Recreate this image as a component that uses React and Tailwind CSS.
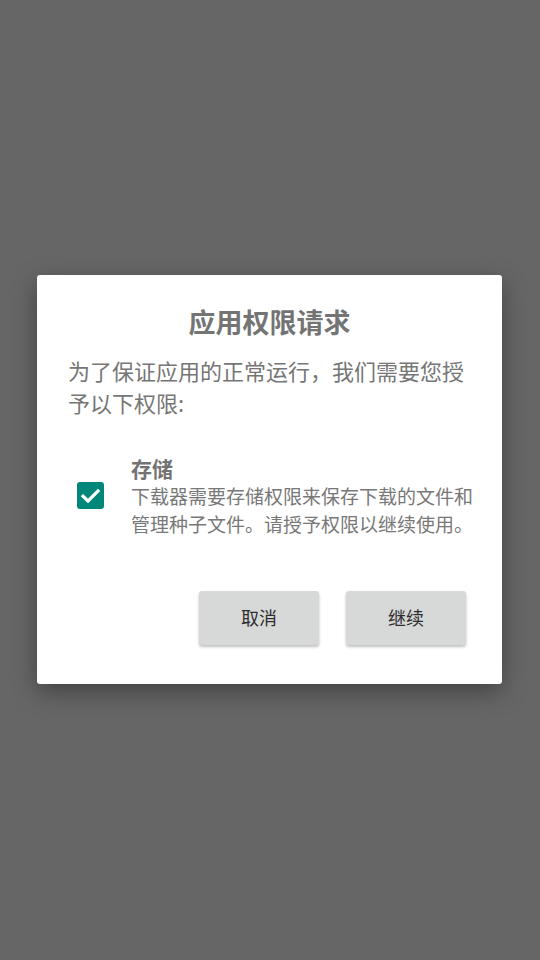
export default function App() {
  return (
    <div
      className="w-full h-screen bg-[#666666] flex items-center justify-center pr-px pb-[2px]"
      style={{ fontFamily: '"Noto Sans CJK SC", "Noto Sans", sans-serif' }}
    >
      <div className="w-[465px] bg-white rounded-[3px] shadow-[0_8px_24px_rgba(0,0,0,0.35)] pt-[29px] pb-[39px]">
        {/* Title */}
        <h1 className="text-center text-[27px] leading-[36px] font-bold text-[#747474]">
          应用权限请求
        </h1>

        {/* Intro */}
        <p className="mt-[14px] px-[31px] text-[22px] leading-[32px] text-[#767676]">
          为了保证应用的正常运行，我们需要您授予以下权限:
        </p>

        {/* Permission row */}
        <div className="mt-[36px] flex items-center pl-[40px]">
          <div className="w-[27px] h-[27px] rounded-[3px] bg-[#00877a] shrink-0">
            <svg width="27" height="27" viewBox="0 0 27 27" fill="none">
              <path
                d="M6 14.2l5 4.8L21 9"
                stroke="white"
                strokeWidth="3.2"
                strokeLinecap="square"
                strokeLinejoin="miter"
              />
            </svg>
          </div>
          <div className="ml-[27px] w-[352px]">
            <div className="text-[21px] leading-[28px] font-bold text-[#737373]">存储</div>
            <div className="text-[19px] leading-[28px] text-[#787878]">
              下载器需要存储权限来保存下载的文件和管理种子文件。请授予权限以继续使用。
            </div>
          </div>
        </div>

        {/* Buttons */}
        <div className="mt-[53px] flex justify-end gap-[27px] pr-[36px]">
          <button className="w-[120px] h-[54px] rounded-[3px] bg-[#d7d8d8] text-[18px] text-[#2e2e2e] shadow-[0_2px_3px_rgba(0,0,0,0.25)]">
            取消
          </button>
          <button className="w-[120px] h-[54px] rounded-[3px] bg-[#d7d8d8] text-[18px] text-[#2e2e2e] shadow-[0_2px_3px_rgba(0,0,0,0.25)]">
            继续
          </button>
        </div>
      </div>
    </div>
  );
}
